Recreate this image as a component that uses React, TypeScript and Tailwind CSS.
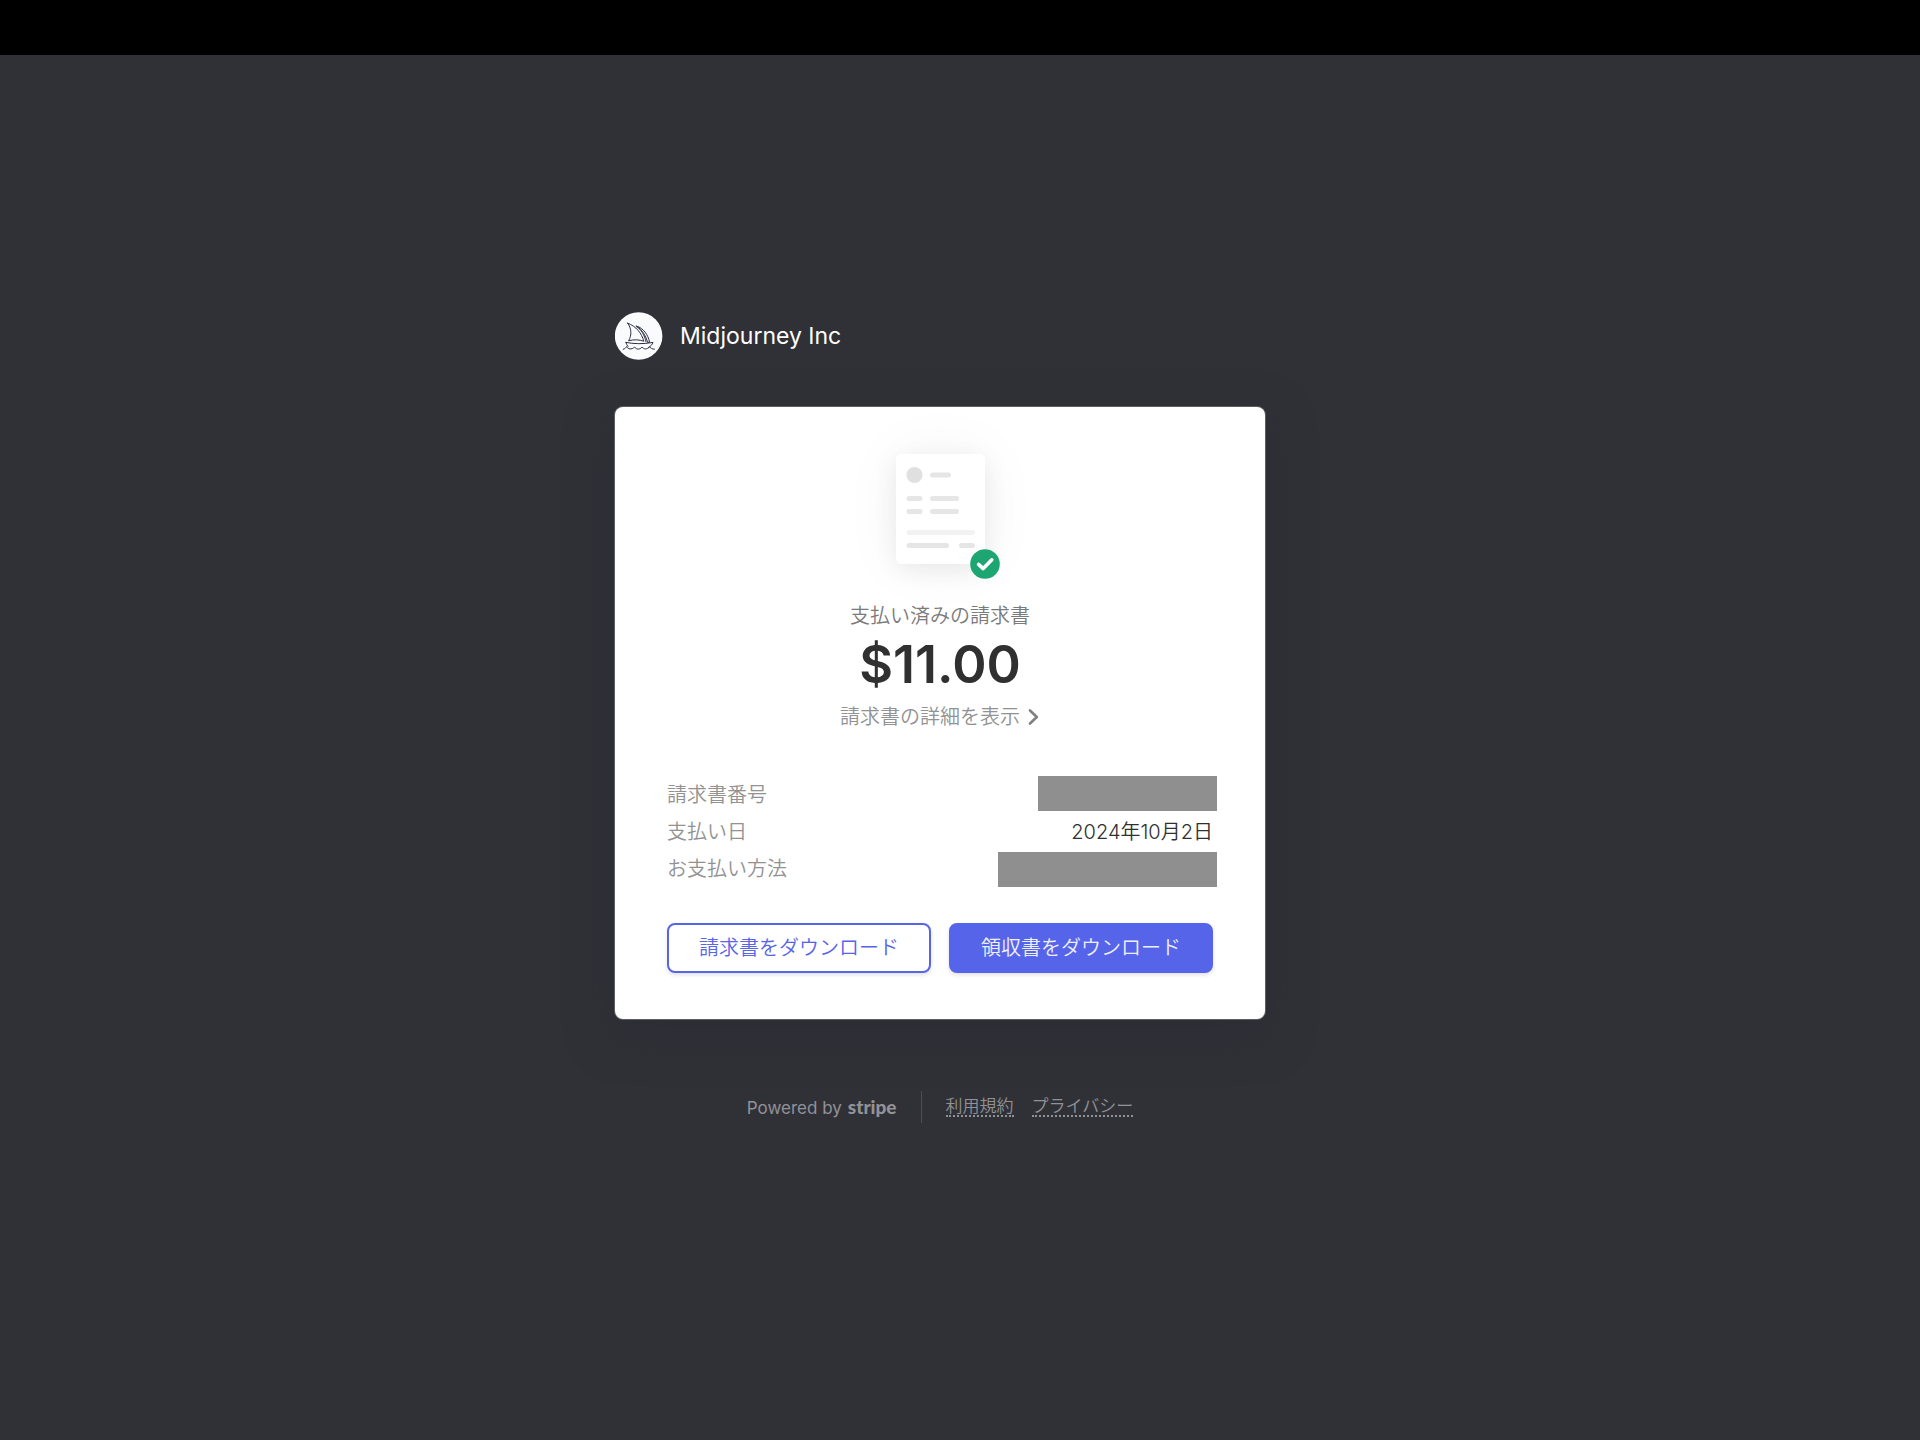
import type { ReactNode } from "react";

const details = [
  { label: "請求書番号", value: <span className="block h-[35px] w-[179px] self-start bg-[#8f8f8f] -mr-1" /> },
  { label: "支払い日", value: "2024年10月2日" },
  { label: "お支払い方法", value: <span className="block h-[35px] w-[219px] self-end bg-[#8f8f8f] -mr-1" /> },
];

function BoatLogo() {
  return (
    <svg className="size-12" viewBox="0 0 48 48" fill="none" stroke="#2b3044" strokeWidth="1" strokeLinecap="round" strokeLinejoin="round">
      <circle cx="23.6" cy="24" r="23.8" fill="#fafbfd" stroke="none" />
      <path d="M12.6 11.2C16.6 16 17 23 13.6 28.8C18.1 27.3 24.6 27.6 28.8 29.2C26.8 21.5 21.1 14 12.6 11.2Z" />
      <path d="M21.1 14.4C26.1 17 29.6 23 31 29.8" />
      <path d="M21.9 14.2C28.4 16.2 33 22.6 34.6 30.2L32.6 30.4C31 24.4 27.4 18 21.9 14.2" />
      <path d="M10.9 30.4C18.6 32 28.6 32.2 38 30.4C37.2 32.6 35.6 34.4 33.4 35.8" />
      <path d="M10.9 30.4C11.3 32 12 33.3 13 34.4" />
      <path d="M8.2 37.3C10 36.8 11 35.8 11.6 34.5C12.8 37.2 16.6 38 19.6 35C21.4 37.8 25 37.8 27 35C29 37.6 32.4 37.6 34.4 34.6C35.6 36.2 37.4 37.2 39.4 37.2" />
    </svg>
  );
}

function PaidInvoice() {
  return (
    <div className="relative">
      <div className="rounded-[5px] bg-white shadow-[0_0_60px_rgba(0,0,0,0.05),0_6px_24px_rgba(0,0,0,0.07)]">
        <svg className="h-[110px] w-[89px]" viewBox="0 0 89 110" fill="#e6e6e6">
          <circle cx="18.5" cy="21" r="8" fill="#e0e0e0" />
          <rect x="34" y="18.5" width="21" height="5" rx="2.5" />
          <rect x="10.5" y="42" width="16" height="5" rx="2.5" />
          <rect x="34" y="42" width="29" height="5" rx="2.5" />
          <rect x="10.5" y="55" width="16" height="5" rx="2.5" />
          <rect x="34" y="55" width="29" height="5" rx="2.5" />
          <rect x="10.5" y="76" width="68.5" height="5" rx="2.5" fill="#f2f2f2" />
          <rect x="10.5" y="89" width="42.5" height="5" rx="2.5" />
          <rect x="63" y="89" width="16" height="5" rx="2.5" />
        </svg>
      </div>
      <svg className="absolute -right-[15px] -bottom-[15px] size-[30px]" viewBox="0 0 30 30" fill="none">
        <circle cx="15" cy="15" r="14.8" fill="#1ea672" />
        <path d="M8.6 15.4L13.2 19.6L21.8 10.8" stroke="#fff" strokeWidth="3.6" strokeLinecap="round" strokeLinejoin="round" />
      </svg>
    </div>
  );
}

function FooterLink({ children }: { children: ReactNode }) {
  return (
    <a href="#" className="border-b-2 border-dotted border-[#929296] leading-[18px]">
      {children}
    </a>
  );
}

export default function App() {
  return (
    <div className="min-h-screen bg-[#303136] font-['Inter','Noto_Sans_CJK_JP',sans-serif]">
      <header className="h-[55px] bg-black" />

      <div className="flex justify-center pt-[257px] pr-10 pb-20">
        <div className="w-full max-w-[650px]">
          <div className="flex items-center gap-[17px]">
            <BoatLogo />
            <h1 className="text-[23px] text-white">Midjourney Inc</h1>
          </div>

          <main className="mt-[47px] rounded-lg bg-white px-[52px] pt-[47px] pb-[46px] shadow-[0_0_0_1px_#5c5d61,0_14px_45px_rgba(44,43,56,0.7)]">
            <div className="flex flex-col items-center">
              <PaidInvoice />
              <p className="mt-9 text-[20px] leading-8 font-[350] text-[#7a7a7a]">支払い済みの請求書</p>
              <p className="text-[52px] leading-[66px] font-semibold text-[#303030]">$11.00</p>
              <button type="button" className="flex items-center gap-2 text-[20px] leading-[38px] font-[350] text-[#929292]">
                請求書の詳細を表示
                <svg className="h-4 w-3" viewBox="0 0 12 16" fill="none" stroke="#808080" strokeWidth="2.6" strokeLinecap="round" strokeLinejoin="round">
                  <path d="M2 1.5L8.8 8L2 14.5" />
                </svg>
              </button>
            </div>

            <dl className="mt-10 text-[20px] leading-[39px] font-[350]">
              {details.map((row) => (
                <div key={row.label} className="flex h-[37px] justify-between">
                  <dt className="text-[#929292]">{row.label}</dt>
                  <dd className="flex text-[#303030]">{row.value}</dd>
                </div>
              ))}
            </dl>

            <div className="mt-9 flex gap-[18px] text-[20px] font-[350]">
              <button type="button" className="h-[50px] flex-1 rounded-lg border-2 border-[#5865e8] bg-white text-[#5865e8] shadow-[0_2px_4px_rgba(0,0,0,0.12)]">
                請求書をダウンロード
              </button>
              <button type="button" className="h-[50px] flex-1 rounded-lg border-2 border-[#5564e8] bg-[#5564e8] text-[#eeeffd] shadow-[0_2px_4px_rgba(0,0,0,0.12)]">
                領収書をダウンロード
              </button>
            </div>
          </main>

          <footer className="mt-[72px] flex h-8 items-center justify-center text-[17px] text-[#929296]">
            <p className="flex items-baseline gap-[6px]">
              Powered by
              <span className="font-['Lato','Noto_Sans',sans-serif] text-[19px] font-black">stripe</span>
            </p>
            <span className="mx-6 h-8 w-px bg-[#4d4e52]" />
            <nav className="flex gap-[18px] font-[350]">
              <FooterLink>利用規約</FooterLink>
              <FooterLink>プライバシー</FooterLink>
            </nav>
          </footer>
        </div>
      </div>
    </div>
  );
}
